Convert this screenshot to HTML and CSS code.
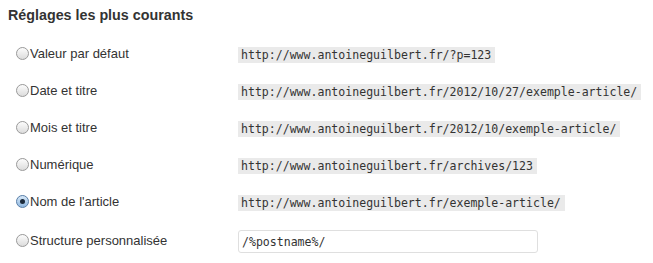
FILE: index.html
```html
<!DOCTYPE html>
<html lang="fr">
<head>
    <meta charset="UTF-8">
    <title>Réglages des permaliens</title>
    <link rel="stylesheet" href="styles.css">
</head>
<body>

<h3 class="title">Réglages les plus courants</h3>

<table class="form-table">
    <tr>
        <th><label><input type="radio" name="selection" value=""> Valeur par défaut</label></th>
        <td><code>http://www.antoineguilbert.fr/?p=123</code></td>
    </tr>
    <tr>
        <th><label><input type="radio" name="selection" value="day"> Date et titre</label></th>
        <td><code>http://www.antoineguilbert.fr/2012/10/27/exemple-article/</code></td>
    </tr>
    <tr>
        <th><label><input type="radio" name="selection" value="month"> Mois et titre</label></th>
        <td><code>http://www.antoineguilbert.fr/2012/10/exemple-article/</code></td>
    </tr>
    <tr>
        <th><label><input type="radio" name="selection" value="numeric"> Numérique</label></th>
        <td><code>http://www.antoineguilbert.fr/archives/123</code></td>
    </tr>
    <tr>
        <th><label><input type="radio" name="selection" value="postname" checked> Nom de l'article</label></th>
        <td><code>http://www.antoineguilbert.fr/exemple-article/</code></td>
    </tr>
    <tr class="custom-row">
        <th><label><input type="radio" name="selection" value="custom"> Structure personnalisée</label></th>
        <td><input type="text" class="regular-text code" value="/%postname%/"></td>
    </tr>
</table>

</body>
</html>
```

FILE: styles.css
```css
body {
    margin: 0;
    padding: 0 8px;
    font-family: "Liberation Sans", Arial, sans-serif;
    font-size: 13px;
    color: #333;
    background: #fff;
}

.title {
    margin: 6px 0 0;
    font-size: 14.3px;
    line-height: 18px;
    font-weight: bold;
    color: #333;
}

.form-table {
    margin-top: 12px;
    border-collapse: collapse;
}

.form-table th,
.form-table td {
    height: 37px;
    padding: 0;
    vertical-align: middle;
    text-align: left;
    font-weight: normal;
}

.form-table th {
    width: 222px;
    padding-left: 8px;
}

.form-table label {
    display: inline-flex;
    align-items: center;
    line-height: 15px;
    white-space: nowrap;
}

.custom-row th,
.custom-row td {
    height: 41px;
}

/* radio buttons, drawn like the old aqua ones */
input[type="radio"] {
    appearance: none;
    -webkit-appearance: none;
    width: 13px;
    height: 13px;
    margin: 0 1px 0 0;
    border: 1px solid #9a9a9a;
    border-radius: 50%;
    background: linear-gradient(#fcfcfc, #dcdcdc);
    box-sizing: border-box;
    position: relative;
    flex: none;
}

input[type="radio"]:checked {
    border-color: #5a7fa8;
    background: linear-gradient(#d8e9f8, #8fb7e0);
}

input[type="radio"]:checked::after {
    content: "";
    position: absolute;
    left: 3px;
    top: 3px;
    width: 5px;
    height: 5px;
    border-radius: 50%;
    background: #1b2a3a;
}

code {
    display: inline-block;
    padding: 1px 4px 1px 3px;
    line-height: 14px;
    font-family: "DejaVu Sans Mono", "Liberation Mono", monospace;
    font-size: 11.55px;
    background: #eaeaea;
    color: #333;
}

input.regular-text {
    width: 300px;
    height: 23px;
    box-sizing: border-box;
    margin: 0;
    padding: 0 3px;
    border: 1px solid #dfdfdf;
    border-radius: 3px;
    font-family: "DejaVu Sans Mono", "Liberation Mono", monospace;
    font-size: 11.55px;
    color: #333;
    background: #fff;
}
```
